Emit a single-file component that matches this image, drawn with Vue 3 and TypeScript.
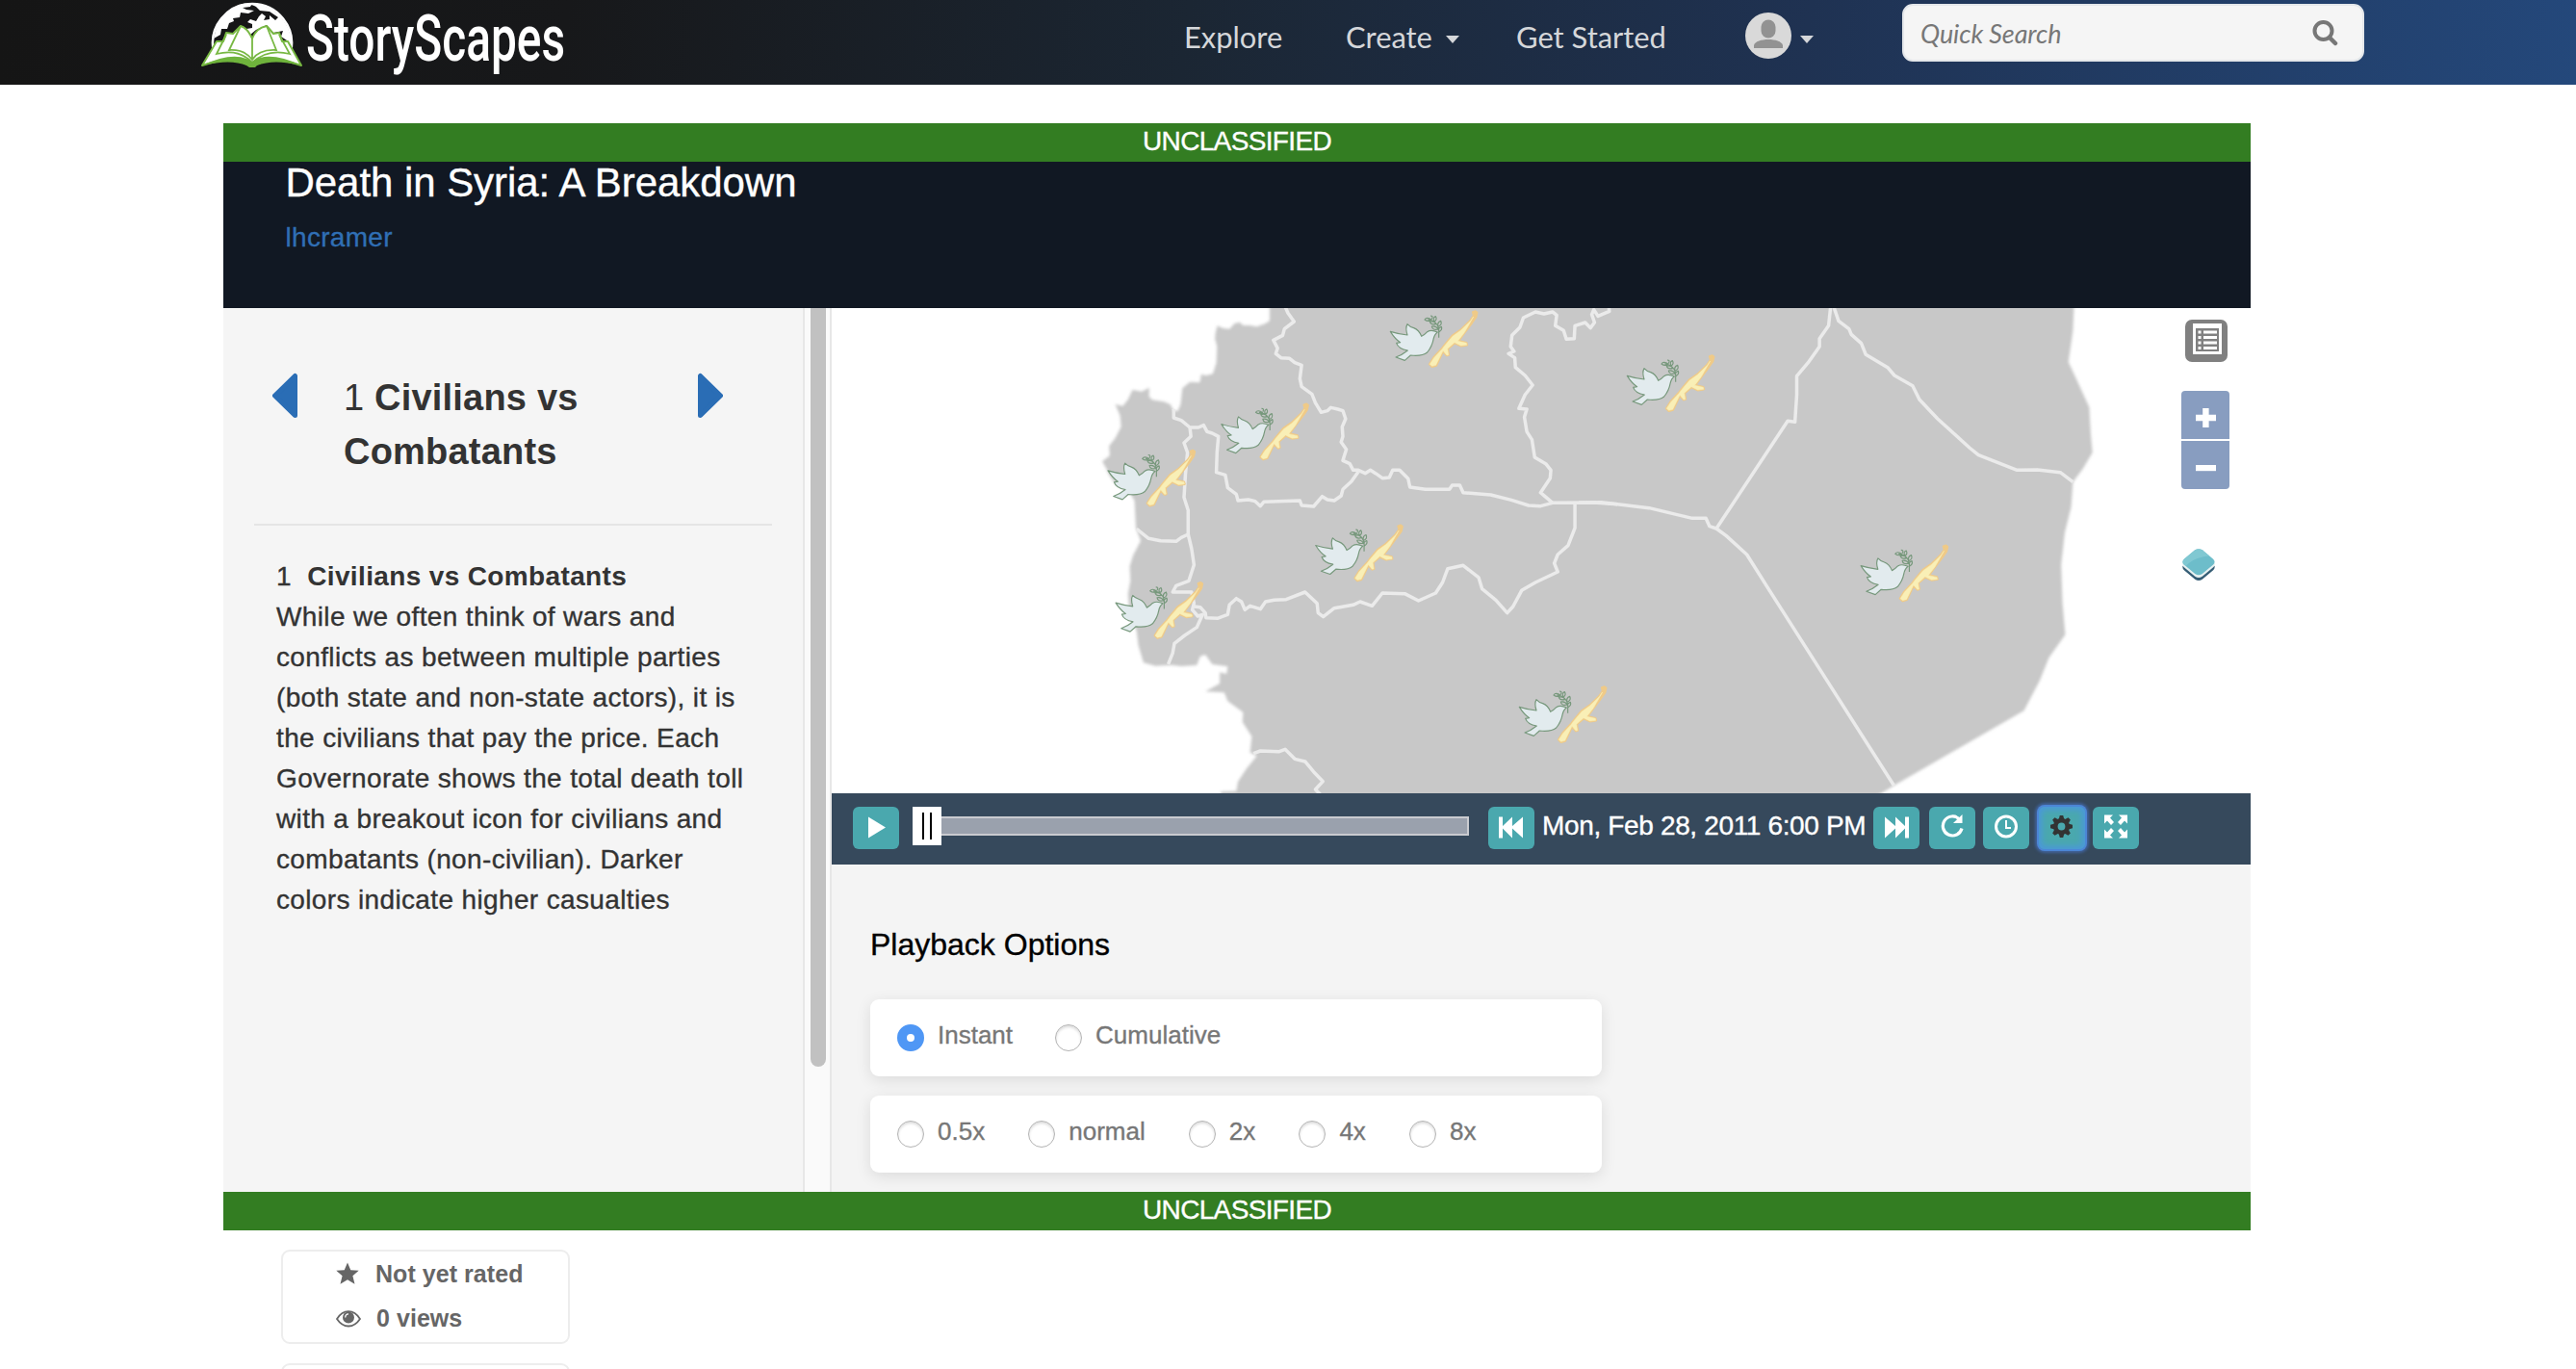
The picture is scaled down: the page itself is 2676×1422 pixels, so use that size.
<script setup lang="ts">
import { ref } from 'vue'

interface Marker { x: number; y: number }

// Governorate icon offsets inside the map viewport
const markers: Marker[] = [
  { x: 566, y: 0 },
  { x: 390.5, y: 96.3 },
  { x: 272.7, y: 144.5 },
  { x: 488.4, y: 222.2 },
  { x: 280.7, y: 281.8 },
  { x: 700, y: 390 },
  { x: 812, y: 46 },
  { x: 1054.8, y: 243.3 },
]

const chapterLines: string[] = [
  'While we often think of wars and',
  'conflicts as between multiple parties',
  '(both state and non-state actors), it is',
  'the civilians that pay the price. Each',
  'Governorate shows the total death toll',
  'with a breakout icon for civilians and',
  'combatants (non-civilian). Darker',
  'colors indicate higher casualties',
]

const modes = ['Instant', 'Cumulative']
const speeds = ['0.5x', 'normal', '2x', '4x', '8x']
const mode = ref('Instant')
const speed = ref('')
</script>

<template>
  <div class="page">
    <header class="topbar">
      <svg class="logo" width="116" height="88" viewBox="0 0 116 88">
        <path d="M21 56 A41 41 0 1 1 103 56 L62 60Z" fill="#161617" />
        <path d="M22 54 A41 41 0 1 1 102 54" fill="none" stroke="#fff" stroke-width="2.500" />
        <path d="M24 32 C28 18 38 8 52 4 L62 3 L60 7 L52 8 L56 10 L64 11 L58 14 L50 13 L49 18 L42 19 L43 22 L38 24 L36 30 L30 30 L29 36 L22 40Z" fill="#fff" />
        <path d="M60 4 C84 4 101 22 103 44 L101 58 L96 50 L98 42 L92 38 L94 32 L84 34 L77 26 L66 31 L60 36 L56 30 L62 29 L62 25 L57 23 L60 20 L66 22 L69 17 L72 14 L76 17 L74 21 L80 20 L80 16 L86 21 L89 18 L80 12 L70 11 L66 7Z" fill="#fff" />
        <path d="M25 43 L32 43 L35 34 L42 35 L50 27 Q57 29 62 40 Q66 29 77 27 L84 35 L90 34 L93 43 L99 43 L113 68 Q82 57 62 69 Q42 57 10 68Z" fill="#fff" stroke="#78b843" stroke-width="2" stroke-linejoin="round" />
        <path d="M50 27 L38 52 Q54 51 62 62 Q69 51 87 52 L77 27 M62 38 V62 M35 36 L25 56 Q48 50 62 65 Q78 50 101 56 L90 36" fill="none" stroke="#78b843" stroke-width="1.800" />
        <path d="M10 68 Q44 52 62 64 Q79 52 113 68 Q84 61 67 68 L65 70 H59 L56 68 Q40 61 10 68Z" fill="#6fb33c" />
      </svg>
      <div class="wordmark"><span>StoryScapes</span></div>
      <nav class="nav">
        <a class="n1">Explore</a>
        <a class="n2">Create<i class="caret"></i></a>
        <a class="n3">Get Started</a>
      </nav>
      <div class="user">
        <svg width="48" height="48" viewBox="0 0 48 48">
          <circle cx="24" cy="24" r="24" fill="#d9d9d9" />
          <rect x="16.500" y="7.500" width="15" height="19" rx="7.500" fill="#929292" />
          <path d="M9 37 V34 C10 30 17 28 24 28 S38 30 39 34 V37Z" fill="#929292" />
        </svg>
        <i class="caret"></i>
      </div>
      <div class="search">
        <span>Quick Search</span>
        <svg width="28" height="28" viewBox="0 0 28 28">
          <circle cx="12.500" cy="12" r="9" fill="none" stroke="#777" stroke-width="4" />
          <path d="M19 19 L25 25" stroke="#777" stroke-width="4.500" stroke-linecap="round" />
        </svg>
      </div>
    </header>

    <main class="story">
      <div class="banner">UNCLASSIFIED</div>
      <div class="heading">
        <h1>Death in Syria: A Breakdown</h1>
        <a>lhcramer</a>
      </div>
      <div class="body">
        <aside class="sidebar">
          <div class="chapter">
            <svg width="26" height="48" viewBox="0 0 26 48"><path d="M23.500 3.500 V44.500 L2.500 24Z" fill="#2a6db5" stroke="#2a6db5" stroke-width="5" stroke-linejoin="round" /></svg>
            <h2><span>1</span> Civilians vs<br />Combatants</h2>
            <svg width="26" height="48" viewBox="0 0 26 48"><path d="M2.500 3.500 V44.500 L23.500 24Z" fill="#2a6db5" stroke="#2a6db5" stroke-width="5" stroke-linejoin="round" /></svg>
          </div>
          <div class="rule"></div>
          <div class="text">
            <div>1&nbsp; <b>Civilians vs Combatants</b></div>
            <div v-for="line in chapterLines" :key="line">{{ line }}</div>
          </div>
        </aside>
        <div class="scroll"><div class="thumb"></div></div>
        <section class="viewer">
          <div class="map">
            <svg class="land" width="1474" height="504" viewBox="0 0 1474 504">
              <defs>
                <filter id="soft" x="-2%" y="-2%" width="104%" height="104%"><feGaussianBlur stdDeviation="1.6" /></filter>
                <filter id="softline" x="-2%" y="-2%" width="104%" height="104%"><feGaussianBlur stdDeviation="0.7" /></filter>
                <g id="pair">
                  <g transform="scale(.33333)">
                    <path d="M43 73 Q65 80 96 84 Q89 62 96 50 Q104 59 116 62 Q132 68 140 88 Q151 82 158 74 Q170 66 190 75 Q180 82 177 98 Q173 120 158 138 Q142 151 106 147 L88 163 L60 153 Q80 146 97 132 Q68 127 62 109 L74 107 Q58 97 43 73Z" fill="#e2ebee" stroke="#77987c" stroke-width="3.500" stroke-linejoin="round" />
                    <path d="M194 92 V78 Q196 58 184 46 Q174 36 160 36 M186 49 Q170 54 166 43 Q178 38 186 49 M180 42 Q190 36 184 26 Q174 30 180 42 M172 37 Q160 44 150 36 Q156 26 172 37 M172 34 Q178 24 168 24 M192 58 Q206 52 200 40 Q188 44 192 58 M192 66 Q174 70 172 57 Q186 54 192 66 M195 74 Q206 68 202 58 Q190 62 195 74" fill="none" stroke="#77987c" stroke-width="3.500" stroke-linejoin="round" />
                    <g stroke-linejoin="round">
                      <path d="M165 175 L178 154 L203 127 L212 115 L236 86 L262 68 L292 39 L303 23 L300 13 L308 10 L313 14 L310 28 L298 45 L274 77 L262 93 L255 102 L280 108 L282 115 L263 118 L243 109 L222 127 L225 146 L219 148 L207 135 L186 179 L173 183Z" fill="#efca88" stroke="#efca88" stroke-width="6.500" />
                      <path d="M166 175 L179 155 L204 128 L213 116 L237 88 L262 70 L293 40 L302 27 L274 76 L261 93 L253 103 L280 109 L281 115 L263 117 L243 107 L221 127 L224 146 L219 147 L207 133 L185 178 L173 181Z" fill="#f9efb6" stroke="#f9efb6" stroke-width="1.500" />
                    </g>
                  </g>
                </g>
              </defs>
              <g fill="#c8c8c8" filter="url(#soft)">
                <path transform="translate(256 -10) scale(.35714 .33333)" d="M557 0V70L545 78 520 88 500 84 480 84 470 74 455 78 440 95 420 92 405 85 400 105 398 125 404 150 402 200 392 235 372 240 358 236 354 262 325 260 303 280 298 330 290 350 278 350 268 330 250 322 215 316 206 305 207 278 185 290 158 285 145 315 130 335 108 330 122 365 125 400 108 435 90 460 92 490 70 508 82 530 90 550 110 580 150 605 164 630 168 715 182 755 160 800 150 835 152 880 145 920 150 990 170 1035 175 1080 190 1135 225 1145 270 1142 300 1146 345 1143 355 1115 370 1110 390 1140 435 1147 432 1170 412 1165 412 1200 370 1225 425 1228 435 1255 480 1290 478 1320 505 1365 500 1415 520 1425 490 1465 465 1505 460 1535 415 1537 410 1600H1600V0Z" />
                <path transform="translate(776 -10) scale(.47192 .33333)" d="M-200 0H1091L1088 100 1078 198 1095 250 1124 340 1127 420 1131 480 1110 530 1088 572 1084 650 1070 730 1062 830 1065 950 1071 1048 1035 1120 1015 1190 980 1285 900 1350 694 1518 600 1600H-200Z" />
              </g>
              <g class="borders" filter="url(#softline)">
                <g transform="translate(256 -10) scale(.35714 .33333)">
                  <path d="M600 20 610 45 628 72 600 95 595 115 568 130 580 155 575 172 590 185 615 187 630 200 650 208 645 250 650 275 680 298 690 325 707 355 725 350 735 340 755 345 770 350 778 375 768 400 770 430 765 448 780 470 770 505 790 515 800 535 815 535 835 545 850 535 865 545 885 560 905 558 915 535 935 535 960 562 965 588 1010 595 1080 595 1088 582 1110 582 1120 605 1200 612 1260 628 1310 645 1345 647 1380 637 1500 636 1568 641" />
                  <path d="M815 540 795 570 770 595 765 615 745 630 725 627 710 617 685 648 650 645 645 630 540 634 530 647 515 632 495 627 465 630 460 610 435 590 428 550 402 542 404 480 408 430 390 420 375 415 365 395 350 402 325 402 300 380 278 372 278 345" />
                  <path d="M325 402 328 430 308 450 318 480 312 550 308 620 320 660 320 735 300 745 285 757 240 755 205 748 170 718" />
                  <path d="M320 735 330 780 337 830 322 880 285 895 275 915 330 915 337 950 332 970 348 990 362 985 345 1025 310 1050 280 1075 275 1105 262 1140" />
                  <path d="M337 960 355 962 370 980 372 995 405 997 435 985 440 955 460 935 475 945 485 970 500 958 530 968 545 945 570 940 605 938 660 915 695 950 698 980 713 992 745 965 800 955 820 945 855 958 885 918 950 920 990 942 1040 918 1060 885 1075 842 1120 832 1165 870 1175 905 1215 940 1248 980 1265 960 1290 910 1330 885 1395 852 1385 825 1395 798 1425 770 1445 715 1445 642" />
                  <path d="M1380 637 1345 605 1373 560 1375 535 1360 515 1328 495 1320 440 1305 415 1298 370 1305 345 1282 343 1300 300 1322 270 1300 240 1272 215 1270 185 1252 172 1268 165 1258 150 1262 115 1285 90 1295 60 1330 42 1355 48 1380 42 1392 52 1388 85 1412 100 1420 127 1443 125 1445 85 1475 75 1490 92 1502 75 1494 50 1500 35 1512 55 1545 40 1543 20" />
                  <path d="M510 1418 530 1410 585 1412 602 1405 630 1435 660 1443 685 1475 712 1505 690 1530 704 1545" />
                </g>
                <g transform="translate(776 -10) scale(.47192 .33333)">
                  <path d="M0 636 50 635 155 653 250 685 280 685 288 710 303 717 325 740 370 798 420 910 694 1518" />
                  <path d="M303 717 460 382 476 385 480 300 480 242 505 200 530 150 530 125 550 85 555 20" />
                  <path d="M560 20 572 70 595 95 600 112 622 140 632 175 680 215 695 240 735 272 750 315 790 375 860 465 880 488 965 535 1010 534 1060 542 1088 572" />
                </g>
              </g>
              <use v-for="(m, i) in markers" :key="i" href="#pair" :x="m.x" :y="m.y" />
            </svg>
            <div class="tools">
              <div class="legend">
                <svg width="30" height="32" viewBox="0 0 30 32">
                  <rect width="30" height="32" fill="#fff" />
                  <path d="M3 5h24v24H3z" fill="#808080" />
                  <path d="M5.500 7.500h3v3h-3zM11 7.500h14v3H11zM5.500 13h3v3h-3zM11 13h14v3H11zM5.500 18.500h3v3h-3zM11 18.500h14v3H11zM5.500 24h3v3h-3zM11 24h14v3H11z" fill="#fff" />
                </svg>
              </div>
              <div class="zoom in"><svg width="50" height="50"><path d="M15 24.700h21v6.600H15zM22.200 18h6.400v20h-6.400z" fill="#fff" /></svg></div>
              <div class="zoom out"><svg width="50" height="50"><path d="M15 25h21v6.200H15z" fill="#fff" /></svg></div>
              <svg class="layers" width="38" height="38" viewBox="0 0 38 38">
                <path d="M1.500 20 L19 9 L36.500 20 Q37 23 35 24.500 L23 34.500 Q19 37.500 15 34.500 L3 24.500 Q1 23 1.500 20Z" fill="#355d75" />
                <path d="M1.500 17 L19 6 L36.500 17 Q37 20 35 21.500 L23 31.500 Q19 34 15 31.500 L3 21.500 Q1 20 1.500 17Z" fill="#e8f1f1" />
                <path d="M15 2.500 Q19 0 23 2.500 L35 12.500 Q38 15.500 35 18.500 L23 28.500 Q19 31 15 28.500 L3 18.500 Q0 15.500 3 12.500Z" fill="#6dbdca" />
                <path d="M15 2.500 Q19 0 23 2.500 L31 9 Q14 10 5 20 L3 18.500 Q0 15.500 3 12.500Z" fill="#80c8d2" />
              </svg>
            </div>
          </div>

          <div class="controls">
            <button class="btn"><svg viewBox="0 0 48 44"><path d="M16 10.500 L34 21.500 L16 32.500Z" fill="#fff" /></svg></button>
            <div class="slider"><div class="track"></div><div class="handle"><i></i><i></i></div></div>
            <button class="btn"><svg viewBox="0 0 48 44"><path d="M11 10.500H15V20L25 10.500V20L36 10.500V32.500L25 22.500V32.500L15 22.500V32.500H11Z" fill="#fff" /></svg></button>
            <span class="date">Mon, Feb 28, 2011 6:00 PM</span>
            <button class="btn"><svg viewBox="0 0 48 44"><path d="M37 10.500H33V20L23 10.500V20L12 10.500V32.500L23 22.500V32.500L33 22.500V32.500H37Z" fill="#fff" /></svg></button>
            <button class="btn refresh"><svg viewBox="0 0 48 44"><path d="M31.500 13 A10 10 0 1 0 34 22.500" fill="none" stroke="#fff" stroke-width="3.200" /><path d="M34.500 8 V17 H25Z" fill="#fff" /></svg></button>
            <button class="btn clock"><svg viewBox="0 0 48 44"><circle cx="24" cy="20.500" r="10.500" fill="none" stroke="#fff" stroke-width="3" /><path d="M24 14 V22 H29" fill="none" stroke="#fff" stroke-width="2" /></svg></button>
            <button class="btn gear"><svg viewBox="0 0 48 44"><g transform="translate(23.500 20.500)"><path v-for="a in 8" :key="a" d="M-3 -7 L-1.700 -11.500 H1.700 L3 -7Z" fill="#333" :transform="`rotate(${a * 45})`" /><circle r="6.200" fill="none" stroke="#333" stroke-width="4.600" /></g></svg></button>
            <button class="btn full"><svg viewBox="0 0 48 44"><path d="M12 8.500H21L18 11.500L22 16L19 19L15 14.500L12 17.500ZM36 8.500V17.500L33 14.500L29 19L26 16L30 11.500L27 8.500ZM12 32.500V23.500L15 26.500L19 22L22 25L18 29.500L21 32.500ZM36 32.500H27L30 29.500L26 25L29 22L33 26.500L36 23.500Z" fill="#fff" /></svg></button>
          </div>

          <div class="options">
            <h3>Playback Options</h3>
            <div class="card">
              <label v-for="m in modes" :key="m" @click="mode = m"><i class="radio" :class="{ on: mode === m }"></i>{{ m }}</label>
            </div>
            <div class="card speeds">
              <label v-for="s in speeds" :key="s" @click="speed = s"><i class="radio" :class="{ on: speed === s }"></i>{{ s }}</label>
            </div>
          </div>
        </section>
      </div>
      <div class="banner">UNCLASSIFIED</div>
    </main>

    <div class="stats">
      <div class="stat"><svg width="24" height="24" viewBox="0 0 24 24"><path d="M12 .5 L15.300 8.200 L23.700 8.800 L17.400 14.200 L19.500 22.800 L12 18.300 L4.500 22.800 L6.600 14.200 L.3 8.800 L8.700 8.200Z" fill="#666" /></svg>Not yet rated</div>
      <div class="stat views"><svg width="26" height="18" viewBox="0 0 26 18"><path d="M1 9 Q6 1.200 13 1.200 T25 9 Q20 16.500 13 16.500 T1 9Z" fill="#fff" stroke="#666" stroke-width="1.800" /><circle cx="13" cy="7.500" r="6" fill="#666" /><path d="M9.700 7.500 Q9.800 4 13 3.800" fill="none" stroke="#fff" stroke-width="1.300" /></svg>0 views</div>
    </div>
    <div class="next"></div>
  </div>
</template>

<style>
body { background: #fff; }
</style>

<style scoped>
.page {
  width: 2676px;
  height: 1422px;
  overflow: hidden;
  background: #fff;
  font-family: "Liberation Sans", Arial, sans-serif;
  color: #333;
  box-sizing: border-box;
}
h1, h2, h3 { margin: 0; font-weight: normal; }
svg { display: block; flex: none; }
.topbar {
  height: 88px;
  display: flex;
  align-items: flex-start;
  padding-left: 200px;
  background: linear-gradient(98deg, #151515 0%, #17181a 22%, #1b2633 46%, #1f3252 70%, #24487b 100%);
  font-family: Lato, sans-serif;
}
.wordmark { display: flex; width: 272px; height: 88px; margin-left: 2px; color: #fff; }
.wordmark span { height: 80px; font: 500 67px/80px Roboto, sans-serif; transform: scaleX(.714); transform-origin: 0 0; white-space: nowrap; }
.nav { display: flex; margin-left: 640px; color: #d5d7da; font-size: 30.900px; line-height: 36px; padding-top: 21px; white-space: nowrap; }
.nav a { display: flex; }
.n1 { width: 168px; }
.n2 { width: 177px; }
.n3 { width: 238px; }
.caret { width: 0; height: 0; border: 7.500px solid transparent; border-top: 8px solid #d5d7da; border-bottom: 0; margin: 16px 0 0 14px; }
.user { display: flex; padding-top: 13px; width: 163px; }
.user .caret { margin: 24px 0 0 9px; }
.search {
  box-sizing: border-box; width: 480px; height: 60px; margin-top: 4px; padding: 0 25px 0 17px;
  display: flex; align-items: center; justify-content: space-between;
  background: #f5f5f5; border: 2px solid #e4e7ea; border-radius: 11px;
  color: #777; font-size: 27px; font-style: italic; letter-spacing: -.1px;
}
.story { width: 2106px; margin: 40px 0 0 232px; -webkit-text-stroke: .35px; }
.banner { height: 40px; line-height: 38px; background: #337d22; color: #fff; text-align: center; font-size: 28px; letter-spacing: -0.65px; }
.heading { height: 152px; box-sizing: border-box; padding: 2px 0 0 64.500px; background: #111823; }
h1 { color: #fff; font-size: 42px; line-height: 40px; letter-spacing: -.05px; }
.heading a { display: block; margin-top: 16px; color: #306fb5; font-size: 28px; line-height: 42px; letter-spacing: .3px; }
.body { display: flex; height: 918px; }
.sidebar { width: 602px; background: #f5f5f5; }
.chapter { display: flex; height: 224px; box-sizing: border-box; padding: 67px 0 0 51px; }
h2 { width: 368px; margin-left: 48px; margin-top: -2px; font-size: 38px; line-height: 56px; font-weight: bold; letter-spacing: .2px; -webkit-text-stroke: 0; }
h2 span { font-weight: normal; }
.chapter svg { width: 26px; }
.rule { height: 2px; margin: 0 32px; background: #e5e5e5; }
.text { padding: 31.500px 0 0 55px; font-size: 28px; line-height: 42px; letter-spacing: .36px; white-space: nowrap; }
.text b { -webkit-text-stroke: 0; }
.scroll { box-sizing: border-box; width: 30px; border: solid #e7e7e7; border-width: 0 2px; background: #fafafa; padding-left: 6px; }
.thumb { width: 16px; height: 788px; background: #c1c1c1; border-radius: 0 0 8px 8px; }
.viewer { width: 1474px; background: #f4f4f4; }
.map { position: relative; height: 504px; overflow: hidden; background: #fff; }
.borders { fill: none; stroke: #ebebeb; stroke-width: 3.500px; stroke-linejoin: round; }
.borders path { vector-effect: non-scaling-stroke; }
.tools { position: absolute; top: 12px; left: 1402px; }
.legend { width: 44px; height: 44px; margin-left: 4px; box-sizing: border-box; padding: 4px 0 0 8px; background: #808080; border-radius: 7px; }
.zoom { width: 50px; height: 50px; background: #889dc0; }
.in { margin-top: 30px; border-radius: 4px 4px 0 0; }
.out { margin-top: 2px; border-radius: 0 0 4px 4px; }
.layers { margin: 60px 0 0 0; width: 36px; }
.controls { display: flex; height: 74px; box-sizing: border-box; padding: 14px 0 0 22px; background: #36495c; }
.btn { width: 48px; height: 44px; flex: none; padding: 0; border: 0; border-radius: 6px; background: #4aa8ae; }
.btn svg { width: 48px; height: 44px; }
.slider { width: 578px; height: 40px; margin: 0 20px 0 14px; display: flex; align-items: center; position: relative; }
.track { box-sizing: border-box; width: 570px; height: 20px; margin-left: 8px; border: 2px solid #cacbd0; background: #9aa1ad; }
.handle { position: absolute; left: 0; top: 0; width: 30px; height: 40px; background: #fff; display: flex; gap: 6px; justify-content: center; align-items: center; }
.handle i { width: 2px; height: 28px; margin-top: -1px; background: #000; }
.date { width: 344px; margin-left: 8px; color: #fff; font-size: 28px; line-height: 40px; letter-spacing: -.35px; white-space: nowrap; }
.refresh { margin-left: 10px; }
.clock { margin-left: 8px; }
.gear { margin-left: 10px; box-shadow: 0 0 0 2px #4c86d6, 0 0 3px 4px #41639c, inset 0 0 6px 3px #4b97dc; }
.full { margin-left: 8px; }
.options { padding: 64px 0 0 40px; }
h3 { color: #000; font-size: 32px; line-height: 38px; height: 76px; }
.card { display: flex; gap: 44px; align-items: flex-start; box-sizing: border-box; width: 760px; height: 80px; margin-bottom: 20px; padding: 26px 28px 0; background: #fff; border-radius: 9px; box-shadow: 0 4px 16px rgba(0, 0, 0, .1); }
.speeds { gap: 45.100px; }
label { display: flex; color: #777; font-size: 26px; line-height: 22px; }
.radio { box-sizing: border-box; width: 28px; height: 28px; margin-right: 14px; border: 1.500px solid #b4b4b4; border-radius: 50%; background: #fff; box-shadow: inset 0 2px 3px rgba(0, 0, 0, .14); }
.radio.on { border: 10px solid #4f97f5; box-shadow: none; }
.stats { box-sizing: border-box; width: 300px; height: 98px; margin: 20px 0 20px 292px; padding: 8px 0 0 55px; border: 2px solid #ededed; border-radius: 9px; color: #666; font-size: 25px; font-weight: bold; letter-spacing: .05px; }
.stat { display: flex; height: 46px; line-height: 31px; white-space: nowrap; }
.stat svg { margin: 3px 17px 0 0; }
.stat.views svg { margin: 7px 16px 0 0; }
.next { box-sizing: border-box; width: 300px; height: 98px; margin-left: 292px; border: 2px solid #ededed; border-radius: 9px; }
</style>
